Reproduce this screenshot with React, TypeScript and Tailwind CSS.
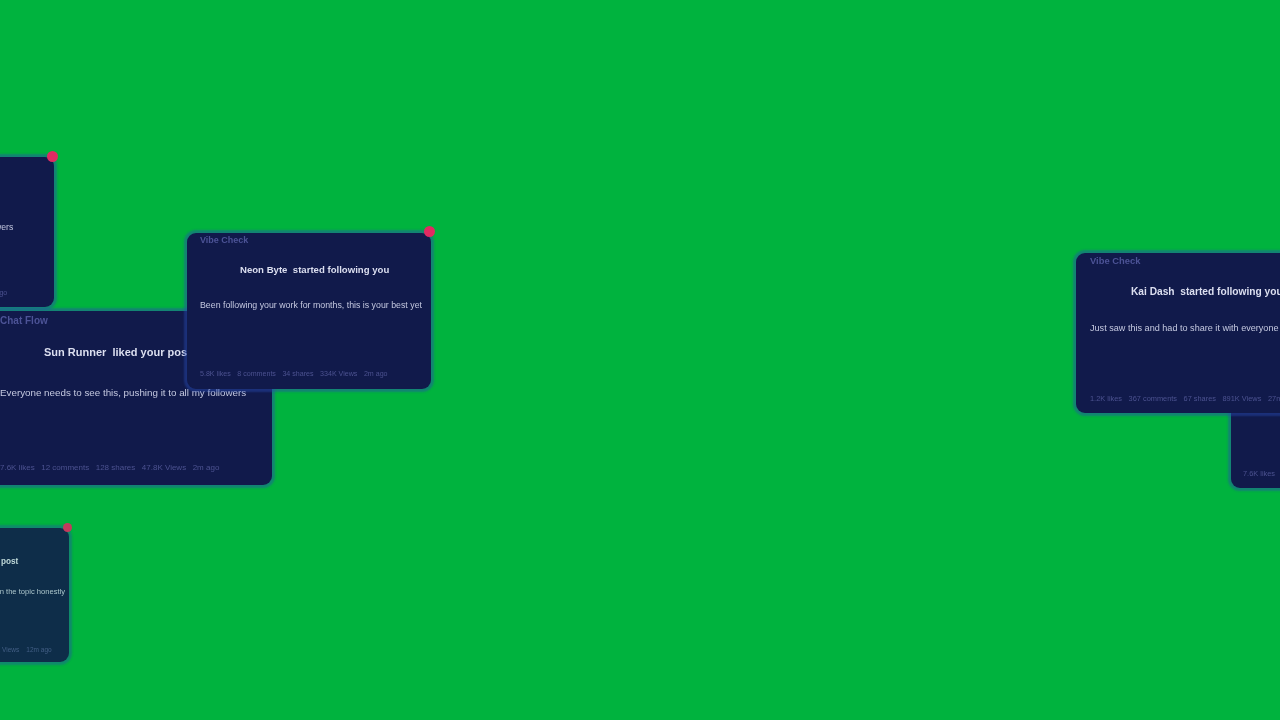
const font = { fontFamily: '"Liberation Sans", Arial, sans-serif' };

type CardProps = {
  box: string;
  pad: string;
  label?: string;
  labelCls: string;
  title?: string;
  action?: string;
  titleCls: string;
  body: string;
  bodyCls: string;
  meta: string[];
  metaCls: string;
  dot?: string;
  outer?: string;
};

function Card(p: CardProps) {
  return (
    <div className={`absolute ${p.box} ${p.outer ?? ""}`}>
      <div className={`relative flex h-full w-full flex-col overflow-hidden rounded-[9px] bg-[#111a4b] shadow-[0_0_2px_3px_rgba(40,75,180,0.45)] ${p.pad}`}>
        {p.label && <div className={`whitespace-nowrap font-bold text-[#4c5396] ${p.labelCls}`}>{p.label}</div>}
        {p.title && (
          <div className={`whitespace-pre font-bold text-[#dcdff0] ${p.titleCls}`}>
            {p.title}  {p.action}
          </div>
        )}
        <div className={`whitespace-nowrap text-[#c5c9e0] ${p.bodyCls}`}>{p.body}</div>
        <div className={`mt-auto flex whitespace-nowrap text-[#4c5290] ${p.metaCls}`}>
          {p.meta.map((m) => (
            <span key={m}>{m}</span>
          ))}
        </div>
      </div>
      {p.dot && <div className={`absolute rounded-full bg-[#e02a62] ${p.dot}`} />}
    </div>
  );
}

export default function App() {
  return (
    <div className="relative h-[720px] w-[1280px] overflow-hidden bg-[#00b33e]" style={font}>
      <div className="absolute inset-0 blur-[0.7px]">
        <Card
          box="left-[-225px] top-[157px] h-[150px] w-[279px]"
          pad="pb-[9px] pl-[13px] pt-[6px]"
          label="Chat Flow"
          labelCls="text-[9px] leading-[12px]"
          title="Sun Runner"
          action="liked your post"
          titleCls="ml-[50px] mt-[14px] text-[9px] leading-[12px]"
          body="Everyone needs to see this, pushing it to all my followers"
          bodyCls="ml-[7px] mt-[20px] text-[8.7px] leading-[12px]"
          meta={["7.6K likes", "12 comments", "128 shares", "47.8K Views", "2m ago"]}
          metaCls="ml-[26px] gap-[6px] text-[7px] leading-[10px]"
          dot="right-[-4px] top-[-6px] h-[11px] w-[11px]"
        />
        <Card
          box="left-[-14px] top-[311px] h-[174px] w-[286px]"
          pad="pb-[11px] pl-[14px] pt-[4px]"
          label="Chat Flow"
          labelCls="text-[10px] leading-[12px]"
          title="Sun Runner"
          action="liked your post"
          titleCls="ml-[44px] mt-[17px] text-[11px] leading-[16px]"
          body="Everyone needs to see this, pushing it to all my followers"
          bodyCls="mt-[26px] text-[9.8px] leading-[14px]"
          meta={["7.6K likes", "12 comments", "128 shares", "47.8K Views", "2m ago"]}
          metaCls="gap-[6.5px] text-[8px] leading-[12px]"
        />
        <Card
          box="left-[187px] top-[233px] h-[156px] w-[244px]"
          pad="pb-[10px] pl-[13px] pt-[2px]"
          label="Vibe Check"
          labelCls="text-[9px] leading-[11px]"
          title="Neon Byte"
          action="started following you"
          titleCls="ml-[40px] mt-[17px] text-[9.6px] leading-[14px]"
          body="Been following your work for months, this is your best yet"
          bodyCls="mt-[21px] text-[8.8px] leading-[14px]"
          meta={["5.8K likes", "8 comments", "34 shares", "334K Views", "2m ago"]}
          metaCls="gap-[6.5px] text-[7.1px] leading-[10px]"
          dot="right-[-4px] top-[-7px] h-[11px] w-[11px]"
        />
        <Card
          box="left-[1231px] top-[395px] h-[93px] w-[260px]"
          pad="pb-[9px] pl-[12px] pt-[2px]"
          body=""
          labelCls=""
          titleCls=""
          bodyCls=""
          meta={["7.6K likes", "12 comments", "128 shares"]}
          metaCls="gap-[7px] text-[7.4px] leading-[10px]"
        />
        <Card
          box="left-[1076px] top-[253px] h-[160px] w-[260px]"
          pad="pb-[9px] pl-[14px] pt-[2px]"
          label="Vibe Check"
          labelCls="text-[9.4px] leading-[12px]"
          title="Kai Dash"
          action="started following you"
          titleCls="ml-[41px] mt-[17px] text-[10.2px] leading-[15px]"
          body="Just saw this and had to share it with everyone"
          bodyCls="mt-[22px] text-[9.1px] leading-[14px]"
          meta={["1.2K likes", "367 comments", "67 shares", "891K Views", "27m ago"]}
          metaCls="gap-[6.5px] text-[7.4px] leading-[10px]"
        />
        <Card
          box="left-[-230px] top-[528px] h-[134px] w-[299px]"
          outer="opacity-[0.87]"
          pad="pb-[8px] pl-[10px] pt-[2px]"
          label="Chat Flow"
          labelCls="text-[8px] leading-[10px]"
          title="Sun Runner"
          action="liked your post"
          titleCls="ml-[129px] mt-[16px] text-[8.2px] leading-[12px]"
          body="Really good perspective here on the topic honestly"
          bodyCls="ml-[115px] mt-[18px] text-[7.6px] leading-[12px]"
          meta={["2.4K comments", "84 shares", "12K Views", "12m ago"]}
          metaCls="ml-[121px] gap-[7px] text-[6.5px] leading-[9px]"
          dot="right-[-3px] top-[-5px] h-[9px] w-[9px]"
        />
      </div>
    </div>
  );
}
